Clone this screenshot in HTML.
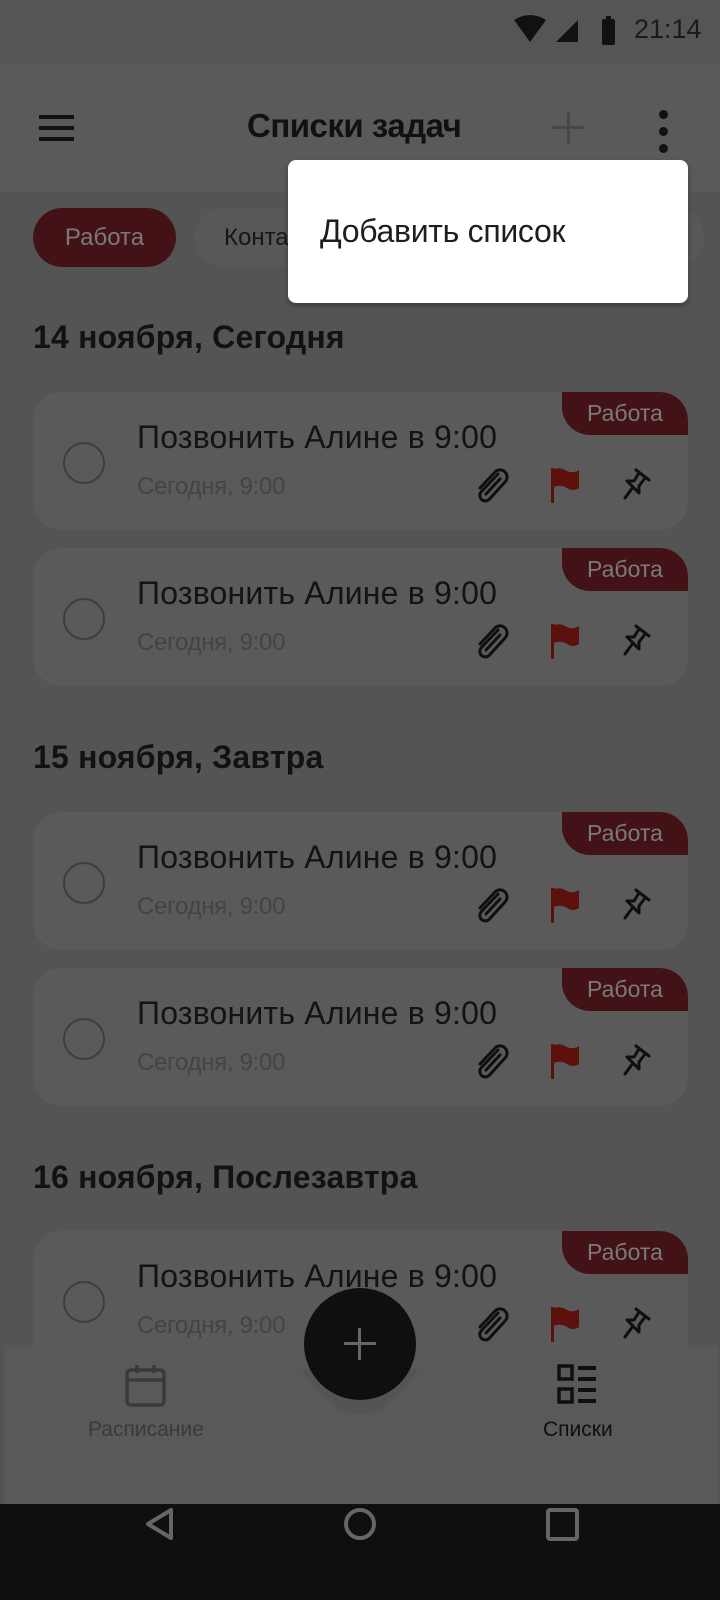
<!DOCTYPE html>
<html><head><meta charset="utf-8"><style>
*{margin:0;padding:0;box-sizing:border-box}
body{width:720px;height:1600px;background:#545454;font-family:"Liberation Sans",sans-serif;position:relative;overflow:hidden;color:#141414}
.abs{position:absolute}
.card{position:absolute;left:33px;width:655px;height:138px;background:#5a5a5a;border-radius:28px;overflow:hidden}
.tag{position:absolute;right:0;top:0;width:126px;height:43px;background:#431217;border-radius:0 28px 0 28px;color:#7a7a7a;font-size:23px;text-align:center;line-height:43px}
.circ{position:absolute;left:30px;top:50px;width:42px;height:42px;border:2px solid #3e3e3e;border-radius:50%}
.tt{position:absolute;left:104px;top:27px;font-size:32px;color:#131313;letter-spacing:0.2px}
.st{position:absolute;left:104px;top:81px;font-size:24px;color:#444;letter-spacing:-0.3px}
.ic{position:absolute;top:76px}
.sec{position:absolute;left:33px;font-size:32px;font-weight:bold;color:#121212;letter-spacing:0.2px}
</style></head><body>
<div class="abs" style="left:0;top:0;width:720px;height:64px;background:#555"></div>
<svg class="abs" style="left:514px;top:14px" width="120" height="34" viewBox="0 0 120 34">
<path d="M0 6 Q16 -4 32 6 L16 28 Z" fill="#111"/>
<path d="M42 28 L64 6 L64 28 Z" fill="#111"/>
<rect x="88" y="5" width="13" height="26" rx="2" fill="#111"/><rect x="92" y="2" width="5" height="4" fill="#111"/>
</svg>
<div class="abs" style="left:634px;top:14px;font-size:27px;color:#1a1a1a">21:14</div>
<div class="abs" style="left:0;top:64px;width:720px;height:128px;background:#5a5a5a"></div>
<div class="abs" style="left:39px;top:115px;width:35px;height:4px;background:#111;box-shadow:0 11px 0 #111,0 22px 0 #111"></div>
<div class="abs" style="left:247px;top:107px;font-size:33px;font-weight:bold;color:#111;letter-spacing:-0.5px">Списки задач</div>
<div class="abs" style="left:552px;top:126px;width:32px;height:3px;background:#484848"></div>
<div class="abs" style="left:567px;top:112px;width:3px;height:32px;background:#484848"></div>
<div class="abs" style="left:659px;top:110px;width:9px;height:9px;border-radius:50%;background:#111;box-shadow:0 17px 0 #111,0 34px 0 #111"></div>
<div class="abs" style="left:33px;top:208px;width:143px;height:59px;border-radius:30px;background:#431217;color:#7a7a7a;font-size:24px;text-align:center;line-height:59px">Работа</div>
<div class="abs" style="left:194px;top:208px;width:510px;height:59px;border-radius:30px;background:#585858;color:#161616;font-size:24px;line-height:59px;padding-left:30px">Контакты</div>
<div class="abs" style="left:288px;top:160px;width:400px;height:143px;background:#fff;border-radius:8px;box-shadow:0 3px 6px rgba(0,0,0,.3)"></div>
<div class="abs" style="left:320px;top:213px;font-size:32px;color:#1e1e1e;letter-spacing:-0.3px">Добавить список</div>

<div class="sec" style="top:319px">14 ноября, Сегодня</div>
<div class="sec" style="top:739px">15 ноября, Завтра</div>
<div class="sec" style="top:1159px">16 ноября, Послезавтра</div>

<svg width="0" height="0" style="position:absolute"><defs>
<g id="icons">
<path d="M22 6 L5 24 a5.5 5.5 0 0 0 8 7.5 L29 14 a7 7 0 0 0 -10 -10 L4 20 M10 26 L24 11" fill="none" stroke="#0f0f0f" stroke-width="3" stroke-linecap="round"/>
<g transform="translate(75,0)"><rect x="0" y="0" width="3" height="35" fill="#5c110d"/><path d="M2 1 Q10 -1 16 3 Q22 6 28 2 L28 20 Q22 24 16 20 Q10 16 2 19 Z" fill="#5c110d"/></g>
<g transform="translate(146,0)" fill="none" stroke="#0f0f0f" stroke-width="3" stroke-linecap="round" stroke-linejoin="round"><path d="M14 2 L27 12 M17 5 L12 13 L5 13 L17 25 L17 18 L23 10 M11 19 L3 30"/></g>
</g></defs></svg>

<div class="card" style="top:392px"><div class="tag">Работа</div><div class="circ"></div><div class="tt">Позвонить Алине в 9:00</div><div class="st">Сегодня, 9:00</div><svg class="ic" style="left:443px" width="180" height="36"><use href="#icons"/></svg></div>
<div class="card" style="top:548px"><div class="tag">Работа</div><div class="circ"></div><div class="tt">Позвонить Алине в 9:00</div><div class="st">Сегодня, 9:00</div><svg class="ic" style="left:443px" width="180" height="36"><use href="#icons"/></svg></div>
<div class="card" style="top:812px"><div class="tag">Работа</div><div class="circ"></div><div class="tt">Позвонить Алине в 9:00</div><div class="st">Сегодня, 9:00</div><svg class="ic" style="left:443px" width="180" height="36"><use href="#icons"/></svg></div>
<div class="card" style="top:968px"><div class="tag">Работа</div><div class="circ"></div><div class="tt">Позвонить Алине в 9:00</div><div class="st">Сегодня, 9:00</div><svg class="ic" style="left:443px" width="180" height="36"><use href="#icons"/></svg></div>
<div class="card" style="top:1231px"><div class="tag">Работа</div><div class="circ"></div><div class="tt">Позвонить Алине в 9:00</div><div class="st">Сегодня, 9:00</div><svg class="ic" style="left:443px" width="180" height="36"><use href="#icons"/></svg></div>

<svg class="abs" style="left:0;top:1343px" width="720" height="161" viewBox="0 0 720 161">
<path d="M4 6 Q4 2 10 2 L260 2 Q285 2 300 25 Q330 70 360 72 Q390 70 420 25 Q435 2 460 2 L714 2 Q718 2 718 6 L718 161 L4 161 Z" fill="#595959"/>
</svg>
<div class="abs" style="left:304px;top:1288px;width:112px;height:112px;border-radius:50%;background:#0f0f0f"></div>
<div class="abs" style="left:344px;top:1342px;width:32px;height:3px;background:#666"></div>
<div class="abs" style="left:358px;top:1328px;width:3px;height:32px;background:#666"></div>
<svg class="abs" style="left:124px;top:1363px" width="44" height="46" viewBox="0 0 44 46" fill="none" stroke="#3a3a3a" stroke-width="3.5"><rect x="3" y="7" width="37" height="35" rx="4"/><path d="M3 17 H40 M13 2 V10 M30 2 V10"/></svg>
<div class="abs" style="left:88px;top:1418px;font-size:21px;color:#3a3a3a">Расписание</div>
<svg class="abs" style="left:556px;top:1363px" width="44" height="44" viewBox="0 0 44 44" fill="#0f0f0f"><rect x="3" y="3" width="13" height="13" fill="none" stroke="#0f0f0f" stroke-width="3.5"/><rect x="3" y="26" width="13" height="13" fill="none" stroke="#0f0f0f" stroke-width="3.5"/><rect x="22" y="3" width="18" height="4"/><rect x="22" y="14" width="18" height="4"/><rect x="22" y="25" width="18" height="4"/><rect x="22" y="36" width="18" height="4"/></svg>
<div class="abs" style="left:543px;top:1418px;font-size:21px;color:#0f0f0f">Списки</div>

<div class="abs" style="left:0;top:1504px;width:720px;height:96px;background:#0f0f0f"></div>
<svg class="abs" style="left:0;top:1504px" width="720" height="96" viewBox="0 0 720 96" fill="none" stroke="#666" stroke-width="4" stroke-linejoin="round">
<path d="M171 6 L148 20 L171 34 Z"/>
<circle cx="360" cy="20" r="14"/>
<rect x="548" y="6" width="29" height="29" rx="2"/>
</svg>
</body></html>
